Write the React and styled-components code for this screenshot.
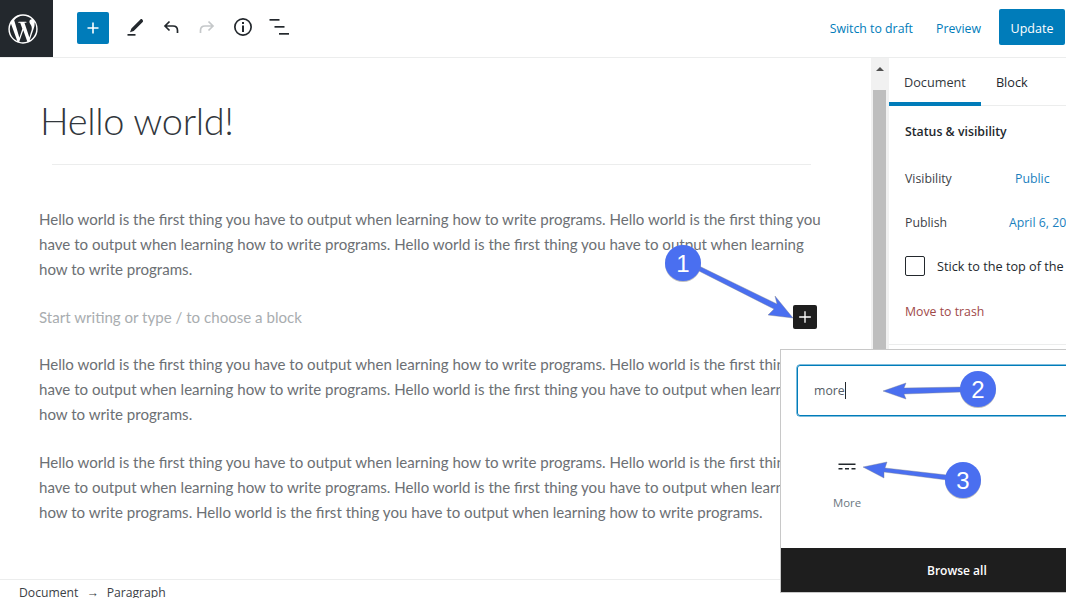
import React from "react";
import styled, { createGlobalStyle } from "styled-components";

const Global = createGlobalStyle`
  html, body { margin: 0; padding: 0; background: #fff; overflow: hidden; }
  #root { width: 1066px; height: 598px; }
  * { box-sizing: border-box; }
`;
const ui = `"Open Sans", "Noto Sans", sans-serif`;

const Page = styled.div`
  position: relative; width: 1066px; height: 598px; overflow: hidden;
  display: flex; flex-direction: column; font-family: ${ui}; color: #23282d;
`;
const TopBar = styled.header`
  height: 58px; flex: none; display: flex; align-items: flex-start; border-bottom: 1px solid #eceded;
`;
const Logo = styled.div`
  width: 53px; height: 57px; background: #23282d; display: flex; align-items: center; padding-left: 7px;
`;
const Tools = styled.div`
  display: flex; align-items: center; height: 57px; margin-left: 24px; flex: 1;
`;
const Inserter = styled.div`
  width: 32px; height: 32px; background: #007cba; border-radius: 2px; display: flex; align-items: center; justify-content: center; margin-right: 14px; margin-top: -1px;
`;
const ToolIcon = styled.div`
  width: 24px; height: 24px; margin-right: 12px; margin-top: -3px; display: flex; align-items: center; justify-content: center;
`;
const Actions = styled.div`
  display: flex; align-items: center; height: 57px; padding-right: 1px;
`;
const LinkBtn = styled.span`
  font-size: 12.3px; color: #007cba; margin-right: ${p => p.$mr}px;
`;
const Update = styled.div`
  width: 66px; height: 36px; padding-top: 2px; background: #007cba; border-radius: 2px; color: #fff; font-size: 12.5px; display: flex; align-items: center; justify-content: center; margin-bottom: 3px;
`;
const Body = styled.div`
  flex: 1; min-height: 0; display: flex;
`;
const Editor = styled.main`
  width: 871px; flex: none; padding: 0 0 0 39px; font-family: Lato, sans-serif; overflow: hidden;
`;
const Title = styled.h1`
  margin: 35px 0 0 1px; font-weight: 300; font-size: 38px; line-height: 54px; color: #32373c; letter-spacing: -0.35px; font-family: "Lato", sans-serif;
`;
const Rule = styled.hr`
  width: 759px; margin: 17px 0 0 13px; border: 0; border-top: 1px solid #eceded;
`;
const Para = styled.p`
  margin: ${p => p.$mt}px 0 0; font-size: 15.09px; line-height: 25px; color: ${p => p.$muted ? "#a9adb0" : "#6c7074"}; white-space: pre;
`;
const Track = styled.div`
  width: 18px; flex: none; background: #f1f1f1; padding: 0 3px 0 2px; display: flex; flex-direction: column;
`;
const Arrow = styled.div`
  width: 0; height: 0; margin: 9px auto 19px; border-left: 4px solid transparent; border-right: 4px solid transparent; border-bottom: 4px solid #505050;
`;
const Thumb = styled.div`
  flex: 1; background: #bebebe;
`;
const Sidebar = styled.aside`
  flex: 1; min-width: 0; overflow: hidden; white-space: nowrap; font-size: 12.3px;
`;
const Tabs = styled.div`
  height: 48px; display: flex; border-bottom: 1px solid #eceded;
`;
const Tab = styled.div`
  padding: 0 15px; height: 48px; display: flex; align-items: center; font-size: 12.7px;
  ${p => p.$active && `border-bottom: 4px solid #007cba; padding-top: 4px; color:#32373c;`}
`;
const Section = styled.section`
  padding: 16px 16px 0;
  height: 239px; border-bottom: 1px solid #eceded;
`;
const SectionTitle = styled.div`
  font-weight: 600; font-size: 12.3px; line-height: 20px; color: #23282d;
`;
const Row = styled.div`
  display: flex; align-items: center; height: 20px; margin-top: ${p => p.$mt}px;
`;
const Label = styled.span`
  width: ${p => p.$w}px; flex: none; color: #3c4146;
`;
const Value = styled.span`
  color: #1a7fbe;
`;
const Check = styled.span`
  width: 20px; height: 20px; border: 1px solid #23282d; border-radius: 2px; margin-right: 12px; flex: none;
`;
const CheckLabel = styled.span`
  font-size: 12.7px;
`;
const Trash = styled.div`
  margin-top: 26px; line-height: 20px; color: #a04848;
`;
const Crumbs = styled.footer`
  height: 19px; flex: none; border-top: 1px solid #eceded; padding: 3px 0 0 19px; display: flex; align-items: flex-start; gap: 8px; font-size: 12.2px; color: #3c4146; line-height: 20px;
`;
const Popup = styled.div`
  position: absolute; left: 780px; top: 349px; width: 300px; height: 244px; background: #fff; border: 1px solid #c8c8c8; display: flex; flex-direction: column;
`;
const Search = styled.div`
  margin: 15px 0 0 16px; width: 290px; height: 51px; border: 1px solid #007cba; box-shadow: 0 0 0 0.5px #007cba; border-radius: 3px; display: flex; align-items: center; padding-left: 16px; font-size: 12.3px; color: #555d66;
`;
const Caret = styled.span`
  display: inline-block; width: 1px; height: 17px; background: #23282d;
`;
const BlockItem = styled.div`
  margin: 39px 0 0 41px; width: 50px; display: flex; flex-direction: column; align-items: center; flex: 1;
`;
const BlockLabel = styled.div`
  font-size: 11.4px; color: #6c7781; margin-top: 16px; line-height: 16px;
`;
const Browse = styled.div`
  height: 44px; flex: none; background: #1e1e1e; color: #fff; font-size: 12px; font-weight: 600; display: flex; align-items: center; padding-left: 146px;
`;
const BlockPlus = styled.div`
  position: absolute; left: 793px; top: 305px; width: 24px; height: 24px; border-radius: 2px; background: #1e1e1e; display: flex; align-items: center; justify-content: center;
`;
const Annotations = styled.svg`
  position: absolute; inset: 0; pointer-events: none;
`;

const Badge = ({ cx, cy, n }) => (
  <g>
    <circle cx={cx} cy={cy + 1} r={18} fill="#8a8a8a" opacity=".55" />
    <circle cx={cx} cy={cy} r={18} fill="#4a6ff0" />
    <text x={cx} y={cy + 8.5} textAnchor="middle" fontFamily="Liberation Sans, sans-serif" fontSize="24" fill="#fff">{n}</text>
  </g>
);

const text1 = "Hello world is the first thing you have to output when learning how to write programs. Hello world is the first thing you\nhave to output when learning how to write programs. Hello world is the first thing you have to output when learning\nhow to write programs.";
const text3 = "Hello world is the first thing you have to output when learning how to write programs. Hello world is the first thing you\nhave to output when learning how to write programs. Hello world is the first thing you have to output when learning\nhow to write programs. Hello world is the first thing you have to output when learning how to write programs.";

export default function App() {
  return (
    <Page>
      <Global />
      <TopBar>
        <Logo>
          <svg width="32" height="32" viewBox="0 0 24 24" fill="#fff">
            <path d="M12 1a11 11 0 1 0 0 22 11 11 0 0 0 0-22zm0 1.100c2.600 0 4.900 1 6.700 2.600h-.2c-1 0-1.700.9-1.700 1.800 0 .8.500 1.500 1 2.300.4.700.8 1.500.8 2.800 0 .9-.3 1.900-.8 3.300l-1 3.400-3.700-10.900c.6 0 1.200-.1 1.200-.1.500-.1.500-.9-.1-.8 0 0-1.600.1-2.700.1-1 0-2.600-.1-2.600-.1-.6 0-.6.8-.1.800 0 0 .500.1 1.100.1l1.600 4.400-2.200 6.700L5.400 5.400C7.200 3.400 9.500 2.100 12 2.100zM2.100 12c0-1.400.3-2.800.900-4l4.700 13C4.400 19.400 2.100 16 2.100 12zm9.900 9.900c-1 0-1.900-.1-2.800-.4l3-8.600 3 8.400.1.100c-1 .3-2.100.5-3.300.5zm8.800-15c.8 1.500 1.100 3.200 1.100 5.100 0 3.600-2 6.800-4.900 8.500l3-8.700c.6-1.400.7-2.500.7-3.500 0-.5 0-.9.100-1.400z" />
          </svg>
        </Logo>
        <Tools>
          <Inserter>
            <svg width="24" height="24" viewBox="0 0 24 24" fill="#fff"><path d="M11.200 6.500h1.600v4.700h4.700v1.600h-4.700v4.700h-1.600v-4.700H6.500v-1.600h4.700z" /></svg>
          </Inserter>
          <ToolIcon>
            <svg width="24" height="24" viewBox="0 0 24 24" fill="#23282d"><path d="M19.300 4.600c-.7-.7-1.400-.6-1.900-.1l-9 9-1.400 3.800 3.700-1.400 9-9c.5-.5.500-1.300-.1-1.900z" /><rect x="4.500" y="19" width="8" height="1.700" /></svg>
          </ToolIcon>
          <ToolIcon>
            <svg width="24" height="24" viewBox="0 0 24 24" fill="none" stroke="#23282d" strokeWidth="1.700"><path d="M18.500 18v-2.500c0-3-2-4.500-4.500-4.500H6.500M10.500 6.500 6 11l4.500 4.500" /></svg>
          </ToolIcon>
          <ToolIcon>
            <svg width="24" height="24" viewBox="0 0 24 24" fill="none" stroke="#c5c8ca" strokeWidth="1.700"><path d="M5.500 18v-2.500c0-3 2-4.500 4.500-4.500h7.500M13.500 6.500 18 11l-4.500 4.500" /></svg>
          </ToolIcon>
          <ToolIcon>
            <svg width="24" height="24" viewBox="0 0 24 24" fill="#23282d"><path d="M12 3a9 9 0 1 0 0 18 9 9 0 0 0 0-18zm0 1.700a7.300 7.300 0 1 1 0 14.600 7.300 7.300 0 0 1 0-14.600zM11 7h2v2h-2zm0 3.500h2V17h-2z" /></svg>
          </ToolIcon>
          <ToolIcon>
            <svg width="24" height="24" viewBox="0 0 24 24" fill="#23282d"><rect x="2.500" y="4" width="10" height="1.700" /><rect x="7.500" y="11" width="10" height="1.700" /><rect x="12" y="18" width="10" height="1.700" /></svg>
          </ToolIcon>
        </Tools>
        <Actions>
          <LinkBtn $mr={23}>Switch to draft</LinkBtn>
          <LinkBtn $mr={18}>Preview</LinkBtn>
          <Update>Update</Update>
        </Actions>
      </TopBar>
      <Body>
        <Editor>
          <Title>Hello world!</Title>
          <Rule />
          <Para $mt={42}>{text1}</Para>
          <Para $mt={23} $muted>Start writing or type / to choose a block</Para>
          <Para $mt={22}>{text1}</Para>
          <Para $mt={23}>{text3}</Para>
        </Editor>
        <Track><Arrow /><Thumb /></Track>
        <Sidebar>
          <Tabs>
            <Tab $active>Document</Tab>
            <Tab>Block</Tab>
          </Tabs>
          <Section>
            <SectionTitle>Status &amp; visibility</SectionTitle>
            <Row $mt={26}><Label $w={110}>Visibility</Label><Value>Public</Value></Row>
            <Row $mt={24}><Label $w={104}>Publish</Label><Value>April 6, 2020</Value></Row>
            <Row $mt={24}><Check /><CheckLabel>Stick to the top of the blog</CheckLabel></Row>
            <Trash>Move to trash</Trash>
          </Section>
        </Sidebar>
      </Body>
      <Crumbs><span>Document</span><span>→</span><span>Paragraph</span></Crumbs>
      <BlockPlus>
        <svg width="20" height="20" viewBox="0 0 24 24" fill="#fff"><path d="M11.200 5h1.600v6.200H19v1.600h-6.200V19h-1.600v-6.200H5v-1.600h6.200z" /></svg>
      </BlockPlus>
      <Popup>
        <Search>more<Caret /></Search>
        <BlockItem>
          <svg width="24" height="24" viewBox="0 0 24 24" fill="#23282d"><rect x="3.500" y="8.500" width="17" height="1.500" /><rect x="3.500" y="13" width="4" height="1.500" /><rect x="10" y="13" width="4" height="1.500" /><rect x="16.500" y="13" width="4" height="1.500" /></svg>
          <BlockLabel>More</BlockLabel>
        </BlockItem>
        <Browse>Browse all</Browse>
      </Popup>
      <Annotations width="1066" height="598" viewBox="0 0 1066 598">
        <g fill="#4a6ff0" stroke="#7a7f90" strokeWidth=".4">
          <path d="M697 270 l2-4 78 38-2-8 18 22-25-3 6-6z" />
          <path d="M883 391l23-8-2 5 58-1v5l-58 2 2 5z" />
          <path d="M863 467l24-5-2 6 62 7v5l-63-8v6z" />
        </g>
        <Badge cx={683} cy={263} n="1" />
        <Badge cx={978} cy={389} n="2" />
        <Badge cx={963} cy={480} n="3" />
      </Annotations>
    </Page>
  );
}
